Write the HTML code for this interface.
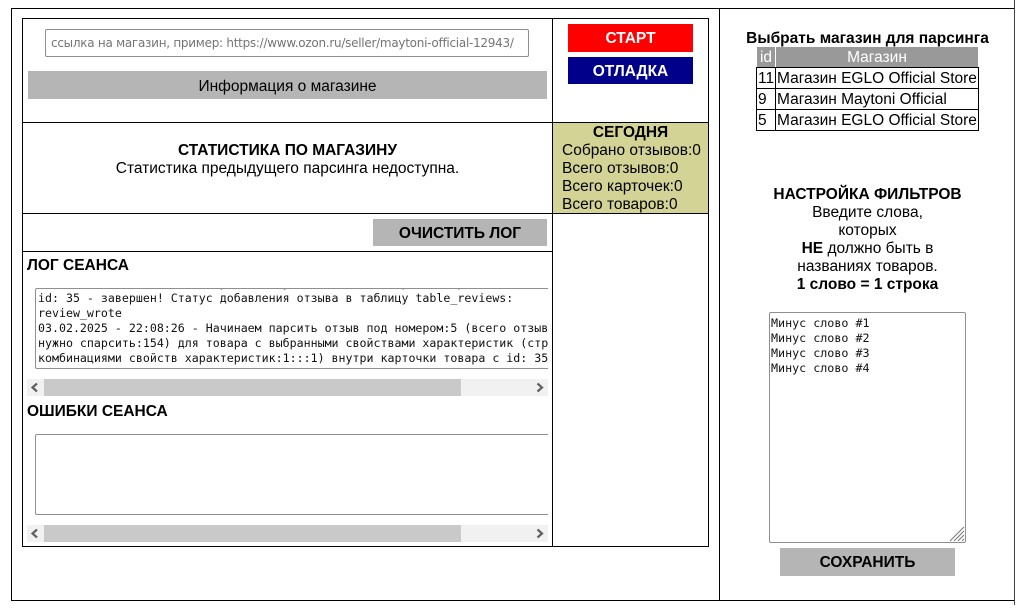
<!DOCTYPE html>
<html lang="ru"><head><meta charset="utf-8"><title>Парсинг</title>
<style>
html,body{margin:0;padding:0;background:#fff}
body{width:1020px;height:610px;position:relative;overflow:hidden;font-family:"Liberation Sans",sans-serif;color:#000;font-size:15.5px}
.l{position:absolute;background:#000}
.t{position:absolute;white-space:nowrap;line-height:18px}
.c{text-align:center}
.b{font-weight:bold}
.box{position:absolute}
.mono{font-family:"DejaVu Sans Mono","Liberation Mono",monospace;font-size:11.62px;line-height:15px;white-space:pre;color:#111}
</style></head><body>
<!-- outer frame -->
<div class="l" style="left:11px;top:8px;width:1003px;height:1px"></div>
<div class="l" style="left:11px;top:600px;width:1003px;height:1px"></div>
<div class="l" style="left:11px;top:8px;width:1px;height:593px"></div>
<div class="l" style="left:719px;top:8px;width:1px;height:593px"></div>
<div class="l" style="left:1014px;top:0;width:1px;height:605px;background:#444"></div>
<!-- main table -->
<div class="l" style="left:22px;top:18px;width:687px;height:1px"></div>
<div class="l" style="left:22px;top:546px;width:687px;height:1px"></div>
<div class="l" style="left:22px;top:18px;width:1px;height:529px"></div>
<div class="l" style="left:708px;top:18px;width:1px;height:529px"></div>
<div class="l" style="left:552px;top:18px;width:1px;height:529px"></div>
<div class="l" style="left:22px;top:122px;width:687px;height:1px"></div>
<div class="l" style="left:22px;top:213px;width:687px;height:1px"></div>
<div class="l" style="left:22px;top:251px;width:530px;height:1px"></div>
<!-- input -->
<div class="box" style="left:45px;top:29px;width:482px;height:26px;border:1px solid #8f8f8f;border-radius:2px"></div>
<div class="t" style="left:51px;top:34px;font-family:'DejaVu Sans',sans-serif;font-size:12px;color:#757575;letter-spacing:-.27px">ссылка на магазин, пример: https://www.ozon.ru/seller/maytoni-official-12943/</div>
<div class="box" style="left:28px;top:71px;width:519px;height:28px;background:#b5b5b5"></div>
<div class="t c" style="left:28px;top:78px;width:519px">Информация о магазине</div>
<!-- buttons -->
<div class="box t c b" style="left:568px;top:24px;width:125px;height:28px;line-height:30px;background:#f00;color:#fff">СТАРТ</div>
<div class="box t c b" style="left:568px;top:57px;width:125px;height:27px;line-height:29px;background:#00008b;color:#fff">ОТЛАДКА</div>
<!-- stats -->
<div class="t c b" style="left:23px;top:142px;width:529px">СТАТИСТИКА ПО МАГАЗИНУ</div>
<div class="t c" style="left:23px;top:160px;width:529px">Статистика предыдущего парсинга недоступна.</div>
<div class="box" style="left:553px;top:123px;width:155px;height:90px;background:#d3d396"></div>
<div class="t c b" style="left:553px;top:124px;width:155px">СЕГОДНЯ</div>
<div class="t" style="left:562px;top:142px">Собрано отзывов:0</div>
<div class="t" style="left:562px;top:160px">Всего отзывов:0</div>
<div class="t" style="left:562px;top:178px">Всего карточек:0</div>
<div class="t" style="left:562px;top:196px">Всего товаров:0</div>
<!-- clear -->
<div class="box t c b" style="left:373px;top:219px;width:174px;height:27px;line-height:30px;background:#b5b5b5">ОЧИСТИТЬ ЛОГ</div>
<!-- log -->
<div class="t b" style="left:27px;top:257px">ЛОГ СЕАНСА</div>
<div class="box" style="left:35px;top:288px;width:512px;height:79px;border:solid #8f8f8f;border-width:1px 0 1px 1px;border-radius:2px 0 0 2px;overflow:hidden">
<div class="mono" style="position:absolute;left:2px;top:-13px;width:510px;overflow:hidden">                          р        у                р       р
id: 35 - завершен! Статус добавления отзыва в таблицу table_reviews:
review_wrote
03.02.2025 - 22:08:26 - Начинаем парсить отзыв под номером:5 (всего отзыв
нужно спарсить:154) для товара с выбранными свойствами характеристик (стр
комбинациями свойств характеристик:1:::1) внутри карточки товара с id: 35</div>
</div>
<div class="box" style="left:27px;top:379px;width:521px;height:17px;background:#f1f1f1"></div>
<div class="box" style="left:44px;top:379px;width:417px;height:17px;background:#c9c9c9"></div>
<svg class="box" style="left:27px;top:379px" width="521" height="17"><path d="M10 4.5 L5.5 8.5 L10 12.5" fill="none" stroke="#606060" stroke-width="2.2"/><path d="M510.5 4.5 L515 8.5 L510.5 12.5" fill="none" stroke="#606060" stroke-width="2.2"/></svg>
<!-- errors -->
<div class="t b" style="left:27px;top:403px">ОШИБКИ СЕАНСА</div>
<div class="box" style="left:35px;top:434px;width:512px;height:79px;border:solid #8f8f8f;border-width:1px 0 1px 1px;border-radius:2px 0 0 2px"></div>
<div class="box" style="left:27px;top:525px;width:521px;height:17px;background:#f1f1f1"></div>
<div class="box" style="left:44px;top:525px;width:417px;height:17px;background:#c9c9c9"></div>
<svg class="box" style="left:27px;top:525px" width="521" height="17"><path d="M10 4.5 L5.5 8.5 L10 12.5" fill="none" stroke="#606060" stroke-width="2.2"/><path d="M510.5 4.5 L515 8.5 L510.5 12.5" fill="none" stroke="#606060" stroke-width="2.2"/></svg>
<!-- right panel -->
<div class="t c b" style="left:720px;top:30px;width:295px">Выбрать магазин для парсинга</div>
<div class="box" style="left:757px;top:47px;width:18px;height:20px;background:#999"></div>
<div class="box" style="left:776px;top:47px;width:202px;height:20px;background:#999"></div>
<div class="t c" style="left:757px;top:49px;width:18px;color:#fff">id</div>
<div class="t c" style="left:776px;top:49px;width:202px;color:#fff">Магазин</div>
<div class="l" style="left:756px;top:67px;width:223px;height:1px"></div>
<div class="l" style="left:756px;top:88px;width:223px;height:1px"></div>
<div class="l" style="left:756px;top:109px;width:223px;height:1px"></div>
<div class="l" style="left:756px;top:130px;width:223px;height:1px"></div>
<div class="l" style="left:756px;top:67px;width:1px;height:64px"></div>
<div class="l" style="left:775px;top:67px;width:1px;height:64px"></div>
<div class="l" style="left:978px;top:67px;width:1px;height:64px"></div>
<div class="t" style="left:758px;top:70px">11</div><div class="t" style="left:777px;top:70px">Магазин EGLO Official Store</div>
<div class="t" style="left:758px;top:91px">9</div><div class="t" style="left:777px;top:91px">Магазин Maytoni Official</div>
<div class="t" style="left:758px;top:112px">5</div><div class="t" style="left:777px;top:112px">Магазин EGLO Official Store</div>
<div class="t c b" style="left:720px;top:186px;width:295px">НАСТРОЙКА ФИЛЬТРОВ</div>
<div class="t c" style="left:720px;top:204px;width:295px">Введите слова,</div>
<div class="t c" style="left:720px;top:222px;width:295px">которых</div>
<div class="t c" style="left:720px;top:240px;width:295px"><b>НЕ</b> должно быть в</div>
<div class="t c" style="left:720px;top:258px;width:295px">названиях товаров.</div>
<div class="t c b" style="left:720px;top:276px;width:295px">1 слово = 1 строка</div>
<div class="box" style="left:769px;top:312px;width:195px;height:229px;border:1px solid #8f8f8f;border-radius:2px"></div>
<div class="mono" style="position:absolute;left:771px;top:316px;font-size:11.7px">Минус слово #1
Минус слово #2
Минус слово #3
Минус слово #4</div>
<svg class="box" style="left:949px;top:526px" width="16" height="16"><path d="M1 15 L15 1 M5 15 L15 5 M9 15 L15 9 M13 15 L15 13" stroke="#777" stroke-width="1" fill="none"/></svg>
<div class="box t c b" style="left:780px;top:548px;width:175px;height:28px;line-height:30px;background:#b5b5b5">СОХРАНИТЬ</div>
</body></html>
